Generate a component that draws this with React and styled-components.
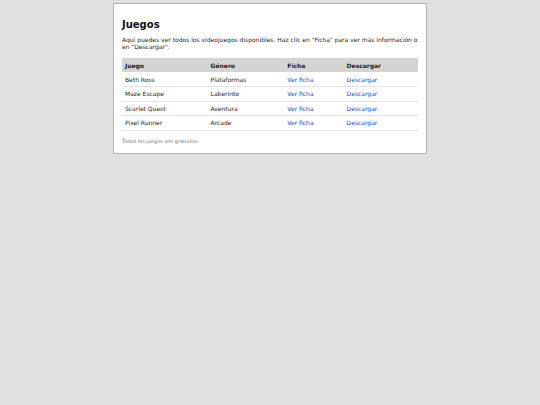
import React from "react";
import styled, { createGlobalStyle } from "styled-components";

const GlobalStyle = createGlobalStyle`
	html, body {
		margin: 0;
		padding: 0;
		background: #e0e0e0;
		font-family: "DejaVu Sans", Verdana, sans-serif;
		color: #222;
	}
`;

const Page = styled.div`
	display: flex;
	justify-content: center;
	padding-top: 3px;
`;

const Panel = styled.section`
	width: 314px;
	box-sizing: border-box;
	background: #fff;
	border: 1px solid #b4b4b4;
	padding: 8px 8px 9px;
`;

const Title = styled.h1`
	margin: 6px 0 5px;
	font-size: 10px;
	line-height: 13px;
	font-weight: bold;
	color: #111;
`;

const Intro = styled.p`
	margin: 0 0 8px;
	font-size: 6px;
	line-height: 7px;
`;

const Table = styled.table`
	width: 100%;
	border-collapse: collapse;
	font-size: 6px;
`;

const Th = styled.th`
	text-align: left;
	background: #d4d4d4;
	font-weight: bold;
	padding: 3px 3px;
	height: 14px;
	box-sizing: border-box;
`;

const Td = styled.td`
	padding: 3px 3px;
	height: 14.5px;
	box-sizing: border-box;
	border-bottom: 1px solid #e2e2e2;
`;

const Link = styled.a`
	color: #2146c7;
	text-decoration: none;
`;

const Note = styled.p`
	margin: 7px 0 0;
	font-size: 5px;
	color: #777;
`;

const games = [
	{ name: "Beth Ross", genre: "Plataformas" },
	{ name: "Maze Escape", genre: "Laberinto" },
	{ name: "Scarlet Quest", genre: "Aventura" },
	{ name: "Pixel Runner", genre: "Arcade" }
];

const App = () => {
	return (
		<Page>
			<GlobalStyle />
			<Panel>
				<Title>Juegos</Title>
				<Intro>
					Aquí puedes ver todos los videojuegos disponibles. Haz clic en "Ficha" para ver más información o en "Descargar".
				</Intro>
				<Table>
					<thead>
						<tr>
							<Th>Juego</Th>
							<Th>Género</Th>
							<Th>Ficha</Th>
							<Th>Descargar</Th>
						</tr>
					</thead>
					<tbody>
						{games.map(game => (
							<tr key={game.name}>
								<Td>{game.name}</Td>
								<Td>{game.genre}</Td>
								<Td>
									<Link href="#">Ver ficha</Link>
								</Td>
								<Td>
									<Link href="#">Descargar</Link>
								</Td>
							</tr>
						))}
					</tbody>
				</Table>
				<Note>Todos los juegos son gratuitos.</Note>
			</Panel>
		</Page>
	);
};

export default App;
